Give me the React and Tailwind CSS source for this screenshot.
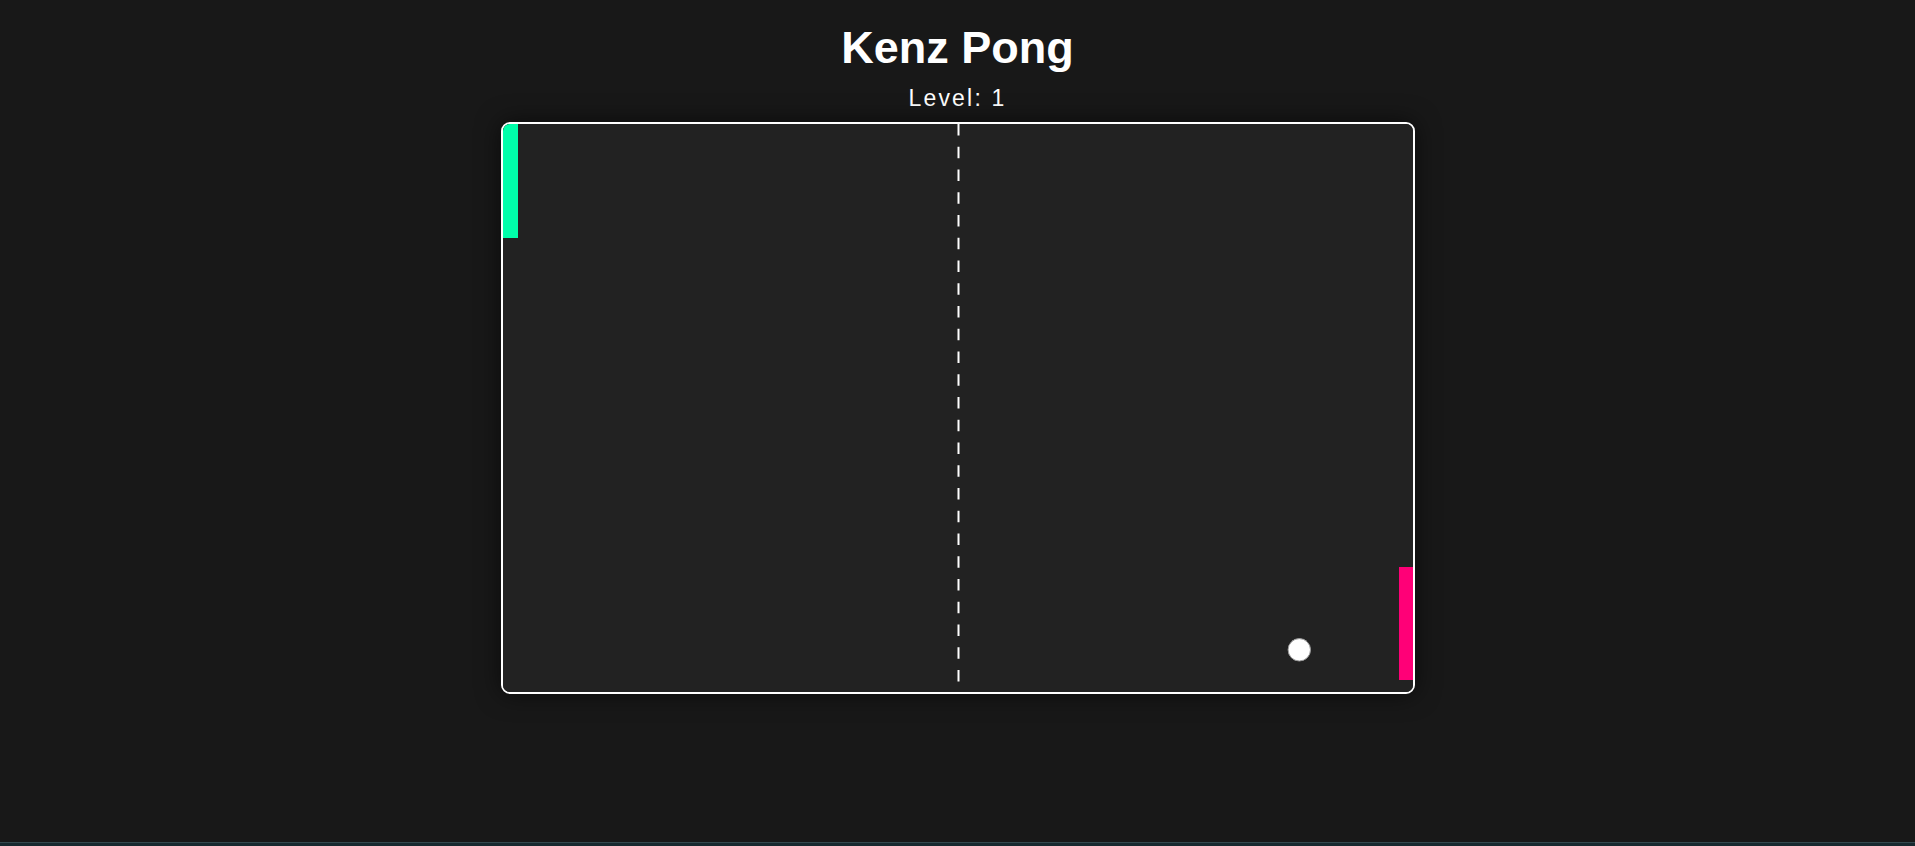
export default function App() {
  return (
    <div
      className="min-h-[846px] flex flex-col bg-[#181818] text-white"
      style={{ fontFamily: '"Liberation Sans", Arial, sans-serif' }}
    >
      <div className="flex flex-col items-center">
        <h1 className="mt-[22px] text-[45px] leading-[52px] font-bold">Kenz Pong</h1>
        <div className="mt-[11px] text-[23px] leading-[26px] tracking-[2.2px]">Level: 1</div>
        <div className="mt-[11px] rounded-[9px] border-2 border-white shadow-[0_0_24px_rgba(0,0,0,0.6)]">
          <div className="relative w-[910px] h-[568px] bg-[#222222] rounded-[7px] overflow-hidden">
            <svg className="absolute inset-0" width="910" height="568">
              <line
                x1="455.5"
                y1="0"
                x2="455.5"
                y2="568"
                stroke="#ffffff"
                strokeWidth="2"
                strokeDasharray="11.375 11.375"
              />
              <circle cx="796.3" cy="525.8" r="11.2" fill="#ffffff" stroke="#9a9a9a" strokeWidth="1" />
            </svg>
            <div className="absolute left-0 top-0 w-[15px] h-[114px] bg-[#00ffaa]" />
            <div className="absolute left-[896px] top-[443px] w-[14px] h-[113px] bg-[#ff0077]" />
          </div>
        </div>
      </div>
      <div className="mt-auto h-[4px] border-t border-[#34484e] bg-[#17292f]" />
    </div>
  );
}
